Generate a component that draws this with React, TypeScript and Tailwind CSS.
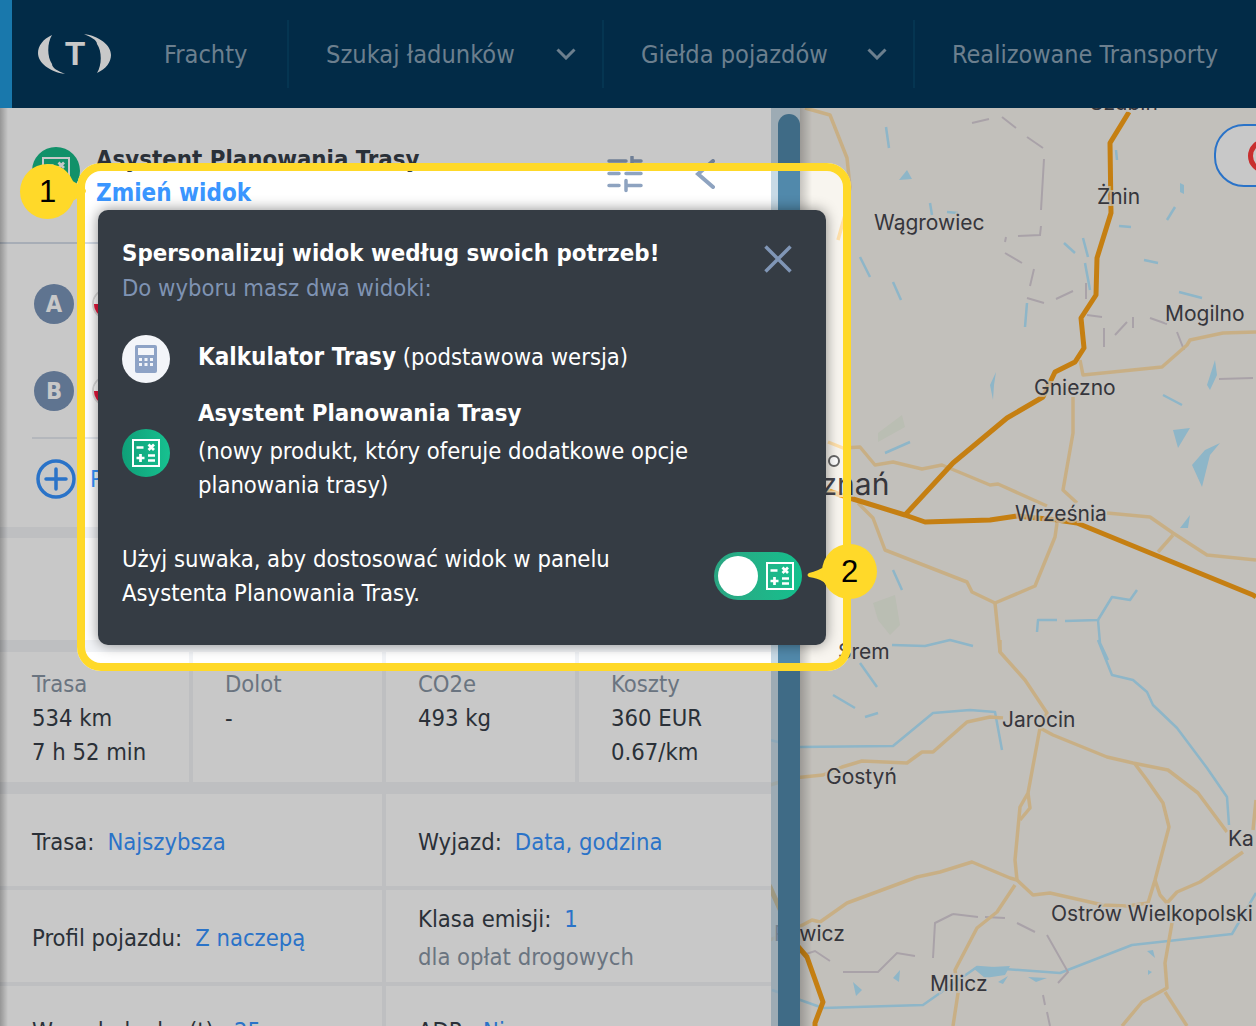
import React from "react";

const minor: string[] = [
  "805,108 830,115 847,158 850,187 845,215 838,240",
  "1000,640 1000,652 1025,680 1047,713 1040,728 1028,793 1020,807 1015,860 1017,880 1010,878 972,862 940,872 917,877 847,903 820,922 812,920 797,928 770,940",
  "1028,793 1030,808 1020,820",
  "1040,728 1053,735 1107,757 1133,763 1168,770 1198,793 1227,832",
  "1135,764 1147,780 1163,803 1169,827 1155,880 1148,903",
  "1155,880 1160,895 1167,903 1177,892 1200,882 1243,852",
  "770,785 793,778 823,775 842,767 862,761 907,763 922,752 933,752 967,722 990,717 1003,718",
  "1017,880 1033,895 1050,893 1103,905 1127,906 1148,903",
  "1015,885 997,912 977,928 955,970 958,993 953,1026",
  "1172,923 1165,963 1167,988 1142,1002 1122,1026",
  "1165,992 1187,1026",
  "1256,800 1253,830",
  "1080,360 1083,375 1162,367 1187,345 1190,340 1223,333 1256,332",
  "1073,397 1073,433 1063,490 1077,503",
  "828,442 843,448 860,447 875,465 893,462 922,469 942,465 990,485 998,484 1047,506",
  "1057,523 1055,537 1035,586 995,603 972,592 967,582 885,550 873,518 858,503",
  "995,603 1000,652",
  "1107,513 1150,517 1173,533 1207,555 1256,560",
  "1173,535 1158,552",
];
const major: string[] = [
  "1129,112 1110,143 1111,213 1097,258 1096,295 1081,318 1084,348 1075,362 1055,372 1043,397 1007,418 953,463 905,515",
  "810,485 853,499 905,515 925,522 990,520 1017,516 1057,520 1077,523 1253,595 1256,597",
  "760,870 770,887 795,943 807,957 823,1002 815,1023 815,1026",
];
const water: string[] = [
  "770,740 798,747 893,746 933,713 970,710 995,712 1002,750",
  "1098,640 1112,675 1133,680 1147,692 1153,705 1177,728 1207,768 1227,797 1229,825",
  "772,990 823,1008 923,1005 977,967 1060,973 1132,945 1232,934 1256,893",
  "893,570 902,590",
  "892,645 925,646 950,640 973,646",
  "1037,632 1038,620 1057,620",
  "1065,621 1098,620 1112,597 1130,600 1137,590",
  "1098,620 1100,643 1108,660",
  "860,663 877,687",
  "833,695 855,708",
  "865,717 878,713",
  "885,453 910,442",
  "886,127 889,148",
  "860,257 870,277",
  "893,282 901,300",
  "1064,243 1075,253",
  "1083,238 1088,257",
  "1085,263 1090,290",
  "1027,303 1025,327",
  "1167,220 1175,207",
  "1144,260 1158,263",
  "1119,226 1131,227",
  "1116,150 1117,160",
  "1179,292 1202,298",
  "930,203 932,215",
  "947,212 958,213",
  "1163,395 1182,405",
];
const lakes: string[] = [
  "899,180 907,170 912,179",
  "1180,183 1184,185 1184,194 1180,192",
  "1173,430 1190,428 1178,448",
  "1192,465 1205,450 1220,443 1210,455 1202,487",
  "993,400 990,385 996,372 994,385",
  "853,982 862,990 856,996",
  "893,978 900,970 899,982",
  "973,968 1010,966 1005,975 985,978",
  "998,982 1008,976 1003,984",
  "1028,977 1047,978 1036,982",
  "1147,951 1153,950 1155,958",
  "1148,970 1152,972 1148,975",
  "1180,528 1190,515 1188,528",
  "1215,360 1217,375 1210,390 1207,385",
];
const borderD =
  "M972 123L989 119M1002 117L1016 128M1027 137L1043 148M1044 159L1041 210M1041 226L1040 235L1018 236M1006 237L1005 242M1005 253L1022 263M1034 269L1030 286M1027 298L1044 303M1056 299L1073 291M1086 283L1086 299M1087 315L1102 317M1104 328L1104 347M1115 335L1127 322M1133 317L1133 328M1150 318L1167 324M1177 332L1184 350M1219 379L1253 378M803 955L815 951L830 961M843 972L878 972L897 953L915 956M933 958L935 923L953 914M953 914L978 917M985 917L1005 918M1017 923L1035 932M1047 935L1068 972L1058 983M1043 995L1045 1005M1047 1012L1050 1026";
const labels: { t: string; x: number; y: number; s?: number }[] = [
  { t: "Szubin", x: 1090, y: 110 },
  { t: "Wągrowiec", x: 874, y: 230 },
  { t: "Żnin", x: 1097, y: 204 },
  { t: "Mogilno", x: 1165, y: 321 },
  { t: "Gniezno", x: 1034, y: 395 },
  { t: "Września", x: 1015, y: 521 },
  { t: "Poznań", x: 784, y: 495, s: 30 },
  { t: "Śrem", x: 838, y: 659 },
  { t: "Jarocin", x: 1002, y: 727 },
  { t: "Gostyń", x: 826, y: 784 },
  { t: "Ostrów Wielkopolski", x: 1051, y: 921 },
  { t: "Rawicz", x: 774, y: 941 },
  { t: "Milicz", x: 930, y: 991 },
  { t: "Ka", x: 1228, y: 846 },
];

function MapCanvas() {
  return (
    <svg className="absolute left-0 top-0" width={1256} height={1026} viewBox="0 0 1256 1026" fill="none">
      <polygon points="878,433 902,415 905,427 878,442" fill="#edf2e4" />
      <polygon points="873,603 895,595 900,625 890,635 878,620" fill="#edf2e4" />
      {water.map((p) => (
        <polyline key={p} points={p} stroke="#b5e8ff" strokeWidth={2.5} strokeLinejoin="round" />
      ))}
      {lakes.map((p) => (
        <polygon key={p} points={p} fill="#b5e8ff" />
      ))}
      <path d={borderD} stroke="#d8cfd7" strokeWidth={2} />
      {minor.map((p) => (
        <polyline key={p} points={p} stroke="#ffe0aa" strokeWidth={3.5} strokeLinejoin="round" />
      ))}
      {major.map((p) => (
        <polyline key={p} points={p} stroke="#fba317" strokeWidth={5} strokeLinejoin="round" />
      ))}
      <circle cx={834} cy={461} r={5} fill="#fff" stroke="#666" strokeWidth={2} />
      {labels.map((l) => (
        <text
          key={l.t}
          x={l.x}
          y={l.y}
          fontFamily="Inter, sans-serif"
          fontSize={l.s ?? 21}
          fill="#45454d"
          stroke="#f8f5ef"
          strokeWidth={4}
          strokeOpacity={0.7}
          paintOrder="stroke"
        >
          {l.t}
        </text>
      ))}
    </svg>
  );
}

function Logo() {
  return (
    <div className="relative w-[74px] h-[42px]">
      <svg className="absolute left-0 top-0" width={74} height={42} viewBox="38 34 74 42" fill="#fff">
        <path d="M52 36C43 40 38 47 38 54 38 64 50 73 65 75 58 72 52 69 52 65 47 58 47 44 52 36Z" />
        <path d="M97 74C106 70 111 63 111 56 111 46 99 37 84 35 91 38 97 41 97 45 102 52 102 66 97 74Z" />
      </svg>
      <span className="absolute left-0 top-0 w-full text-center font-['Liberation_Sans'] font-bold text-[33px] leading-[42px] text-white">
        T
      </span>
    </div>
  );
}

function Chevron() {
  return (
    <svg width={20} height={12} viewBox="0 0 20 12" fill="none" stroke="#8aa3b6" strokeWidth={3}>
      <path d="M1.5 1.5 10 10l8.5-8.5" />
    </svg>
  );
}

function CalcGreen({ size }: { size: number }) {
  return (
    <svg width={size} height={size} viewBox="0 0 28 28" fill="none" stroke="#fff">
      <rect x={1} y={1} width={26} height={26} strokeWidth={2} />
      <path d="M4.500 8.500h7M16.500 5.500l5.500 5.500M22 5.500 16.500 11M4.500 19h8M8.500 15v8M16 16.500h7M16 21.500h7" strokeWidth={2.700} />
    </svg>
  );
}

function Nav() {
  return (
    <header className="h-[108px] shrink-0 flex items-center bg-[#03375b] border-l-[12px] border-[#2199dc] text-[#8aa3b6] text-[25.2px] relative z-10">
      <div className="w-[277px] flex items-center pl-[26px] gap-[52px] h-[68px] border-r-2 border-[#074468]">
        <Logo />
        <span className="pt-[2px]">Frachty</span>
      </div>
      <div className="w-[315px] flex items-center pl-[37px] h-[68px] border-r-2 border-[#074468]">
        <span className="w-[230px] pt-[2px]">Szukaj ładunków</span>
        <Chevron />
      </div>
      <div className="w-[311px] flex items-center pl-[37px] h-[68px] border-r-2 border-[#074468]">
        <span className="w-[226px] pt-[2px]">Giełda pojazdów</span>
        <Chevron />
      </div>
      <span className="pl-[37px] pt-[2px] whitespace-nowrap text-[25px]">Realizowane Transporty</span>
    </header>
  );
}

function Stat({ label, lines }: { label: string; lines: string[] }) {
  return (
    <div className="bg-white pl-[32px] pt-[15px] leading-[34px] text-[#363e48]">
      <div className="text-[#8895a4]">{label}</div>
      {lines.map((l) => (
        <div key={l}>{l}</div>
      ))}
    </div>
  );
}

function Flag() {
  return (
    <div className="w-[32px] h-[32px] rounded-full border-2 border-[#ddd] overflow-hidden flex flex-col">
      <div className="flex-1 bg-white" />
      <div className="flex-1 bg-[#e8173c]" />
    </div>
  );
}

function Panel() {
  return (
    <aside className="w-[771px] shrink-0 relative flex flex-col bg-[#f2f4f7] text-[23.6px] leading-[34px] text-[#363e48]">
      <div className="h-[136px] shrink-0 bg-white border-b-2 border-[#d5dde8] pl-[32px] pr-[56px] pt-[36px] flex items-start">
        <div className="w-[48px] h-[48px] mt-[3px] rounded-full bg-[#16b987] flex items-center justify-center">
          <CalcGreen size={28} />
        </div>
        <div className="ml-[16px] flex-1">
          <div className="font-bold text-[23.8px] leading-[30px]">Asystent Planowania Trasy</div>
          <div className="font-bold text-[24px] leading-[30px] mt-[4px] text-[#3a96ff]">Zmień widok</div>
        </div>
        <svg className="mt-[12px] mr-[52px]" width={36} height={38} viewBox="0 0 36 38" fill="none" stroke="#8ea3c0" strokeWidth={3.500} strokeLinecap="round">
          <path d="M2 5h17M25 1v9M25 5h9M2 17.500h10M19 17.500h15M2 29.500h10M19 29.500h15M19 24.500v10" />
        </svg>
        <svg className="mt-[15px]" width={20} height={30} viewBox="0 0 20 30" fill="none" stroke="#8ea3c0" strokeWidth={4} strokeLinecap="round">
          <path d="M18 2 3 15l15 13" />
        </svg>
      </div>
      <div className="h-[283px] shrink-0 bg-white pl-[32px] relative">
        <div className="h-[195px] border-b-2 border-[#e6eaf0] pt-[40px] pl-[2px] flex flex-col gap-[47px]">
          <div className="flex items-center gap-[18px]">
            <div className="w-[40px] h-[40px] rounded-full bg-[#7a94b8] text-white font-bold text-center leading-[40px]">A</div>
            <Flag />
          </div>
          <div className="flex items-center gap-[18px]">
            <div className="w-[40px] h-[40px] rounded-full bg-[#7a94b8] text-white font-bold text-center leading-[40px]">B</div>
            <Flag />
          </div>
        </div>
        <div className="pl-[4px] pt-[20px] flex items-center gap-[14px] text-[#3693ff]">
          <svg width={40} height={40} viewBox="0 0 40 40" fill="none" stroke="#3693ff" strokeWidth={3.500} strokeLinecap="round">
            <circle cx={20} cy={20} r={18} />
            <path d="M20 10v20M10 20h20" />
          </svg>
          <span>Punkt pośredni</span>
        </div>
      </div>
      <div className="h-[11px] shrink-0" />
      <div className="h-[102px] shrink-0 bg-white" />
      <div className="h-[12px] shrink-0" />
      <div className="h-[130px] shrink-0 grid grid-cols-[189px_189px_189px_1fr] gap-x-[4px]">
        <Stat label="Trasa" lines={["534 km", "7 h 52 min"]} />
        <Stat label="Dolot" lines={["-"]} />
        <Stat label="CO2e" lines={["493 kg"]} />
        <Stat label="Koszty" lines={["360 EUR", "0.67/km"]} />
      </div>
      <div className="h-[12px] shrink-0" />
      <div className="grid grid-cols-[382px_1fr] grid-rows-[92px_92px_1fr] gap-x-[4px] gap-y-[4px] flex-1">
        <div className="bg-white pl-[32px] pt-[3px] flex items-center">
          Trasa:<span className="ml-[13px] text-[#3693ff]">Najszybsza</span>
        </div>
        <div className="bg-white pl-[32px] pt-[3px] flex items-center">
          Wyjazd:<span className="ml-[13px] text-[#3693ff]">Data, godzina</span>
        </div>
        <div className="bg-white pl-[32px] pt-[3px] flex items-center">
          Profil pojazdu:<span className="ml-[13px] text-[#3693ff]">Z naczepą</span>
        </div>
        <div className="bg-white pl-[32px] pt-[3px] flex flex-col justify-center">
          <div>
            Klasa emisji:<span className="ml-[13px] text-[#3693ff]">1</span>
          </div>
          <div className="text-[#8895a4] mt-[4px]">dla opłat drogowych</div>
        </div>
        <div className="bg-white pl-[32px] pt-[28px]">
          Waga ładunku (t):<span className="ml-[13px] text-[#3693ff]">25</span>
        </div>
        <div className="bg-white pl-[32px] pt-[28px]">
          ADR:<span className="ml-[13px] text-[#3693ff]">Nie</span>
        </div>
      </div>
      <div className="absolute left-0 top-0 bottom-0 w-[8px] bg-gradient-to-r from-black/25 to-transparent" />
    </aside>
  );
}

function Strip() {
  return (
    <div className="w-[29px] shrink-0 relative bg-[#b4cfe2]/70 pl-[7px] pt-[6px] flex">
      <div className="w-[16px] flex-1 rounded-t-full bg-[#5189ab]" />
      <div className="absolute left-[29px] top-0 bottom-0 w-[12px] bg-gradient-to-r from-black/20 to-transparent" />
    </div>
  );
}

function Tooltip() {
  return (
    <div className="absolute z-20 left-[98px] top-[210px] w-[728px] h-[435px] bg-[#353c44] rounded-[10px] shadow-[0_0_14px_rgba(0,0,0,0.45)] text-white px-[24px] pt-[26px] text-[23.6px] leading-[34px]">
      <div className="flex justify-between">
        <div>
          <div className="font-bold text-[23.8px]">Spersonalizuj widok według swoich potrzeb!</div>
          <div className="text-[#7f93b3] mt-px">Do wyboru masz dwa widoki:</div>
        </div>
        <svg className="mt-[9px] mr-[10px]" width={28} height={28} viewBox="0 0 28 28" fill="none" stroke="#8096b6" strokeWidth={3.500}>
          <path d="M1.500 1.500 26.500 26.500M26.500 1.500 1.500 26.500" />
        </svg>
      </div>
      <div className="flex items-center gap-[28px] mt-[30px]">
        <div className="w-[48px] h-[48px] rounded-full bg-[#f3f5f9] flex items-center justify-center">
          <svg width={22} height={28} viewBox="0 0 22 28" fill="#8ea3c6">
            <rect width={22} height={28} rx={2} />
            <rect x={3} y={3} width={16} height={7} fill="#f3f5f9" />
            <path d="M4 13h3v3H4zM9.500 13h3v3h-3zM15 13h3v3h-3zM4 18h3v3H4zM9.500 18h3v3h-3zM15 18h3v3h-3z" fill="#f3f5f9" />
          </svg>
        </div>
        <div className="mb-[5px]">
          <span className="font-bold text-[24px]">Kalkulator Trasy</span> (podstawowa wersja)
        </div>
      </div>
      <div className="flex items-center gap-[28px] mt-[12px]">
        <div className="w-[48px] h-[48px] mt-[8px] rounded-full bg-gradient-to-r from-[#0f9f78] to-[#17c190] flex items-center justify-center">
          <CalcGreen size={28} />
        </div>
        <div>
          <div className="font-bold text-[23.8px] mt-px mb-[4px]">Asystent Planowania Trasy</div>
          <div>(nowy produkt, który oferuje dodatkowe opcje</div>
          <div>planowania trasy)</div>
        </div>
      </div>
      <div className="flex items-center justify-between mt-[40px]">
        <div>
          <div>Użyj suwaka, aby dostosować widok w panelu</div>
          <div>Asystenta Planowania Trasy.</div>
        </div>
        <div className="w-[88px] h-[48px] rounded-full bg-gradient-to-r from-[#2aa582] to-[#12c08d] flex items-center pl-[4px] gap-[8px]">
          <div className="w-[40px] h-[40px] rounded-full bg-white" />
          <CalcGreen size={28} />
        </div>
      </div>
    </div>
  );
}

function Bubble({ className, n, tip }: { className: string; n: string; tip: React.ReactNode }) {
  return (
    <div className={className}>
      {tip}
      <div className="relative w-[55px] h-[55px] rounded-full bg-[#ffd929] text-black font-['Liberation_Sans'] text-[31px] leading-[55px] text-center">
        {n}
      </div>
    </div>
  );
}

export default function App() {
  return (
    <div className="relative w-[1256px] h-[1026px] overflow-hidden flex flex-col bg-[#f8f5ef] font-['DejaVu_Sans_Condensed','DejaVu_Sans',sans-serif] [font-stretch:condensed]">
      <Nav />
      <main className="relative flex-1 flex min-h-0">
        <div className="absolute left-0 top-[-108px]">
          <MapCanvas />
        </div>
        <div className="absolute left-[1214px] top-[16px] w-[80px] h-[63px] rounded-[30px] bg-white border-2 border-[#3693ff] flex items-center pl-[32px]">
          <div className="w-[34px] h-[34px] shrink-0 rounded-full border-[5px] border-[#ff3b3b]" />
        </div>
        <Panel />
        <Strip />
      </main>
      <div className="absolute z-20 left-[77px] top-[163px] w-[774px] h-[508px] rounded-[24px] border-[8px] border-[#ffd929] shadow-[0_0_0_2000px_rgba(0,0,0,0.215)]" />
      <Tooltip />
      <Bubble
        className="absolute z-20 left-[20px] top-[164px]"
        n="1"
        tip={
          <svg className="absolute left-[44px] top-[12px]" width={46} height={30} viewBox="0 0 46 30" fill="#ffd929">
            <path d="M0 0Q14 8 20 12Q24 15 20 18Q14 22 0 30Z" />
          </svg>
        }
      />
      <Bubble
        className="absolute z-20 left-[822px] top-[544px]"
        n="2"
        tip={
          <svg className="absolute left-[-16px] top-[14px]" width={30} height={36} viewBox="0 0 30 36" fill="#ffd929">
            <path d="M26 0Q22 10 3 15Q0 17 3 19Q20 21 26 34Z" />
          </svg>
        }
      />
    </div>
  );
}
